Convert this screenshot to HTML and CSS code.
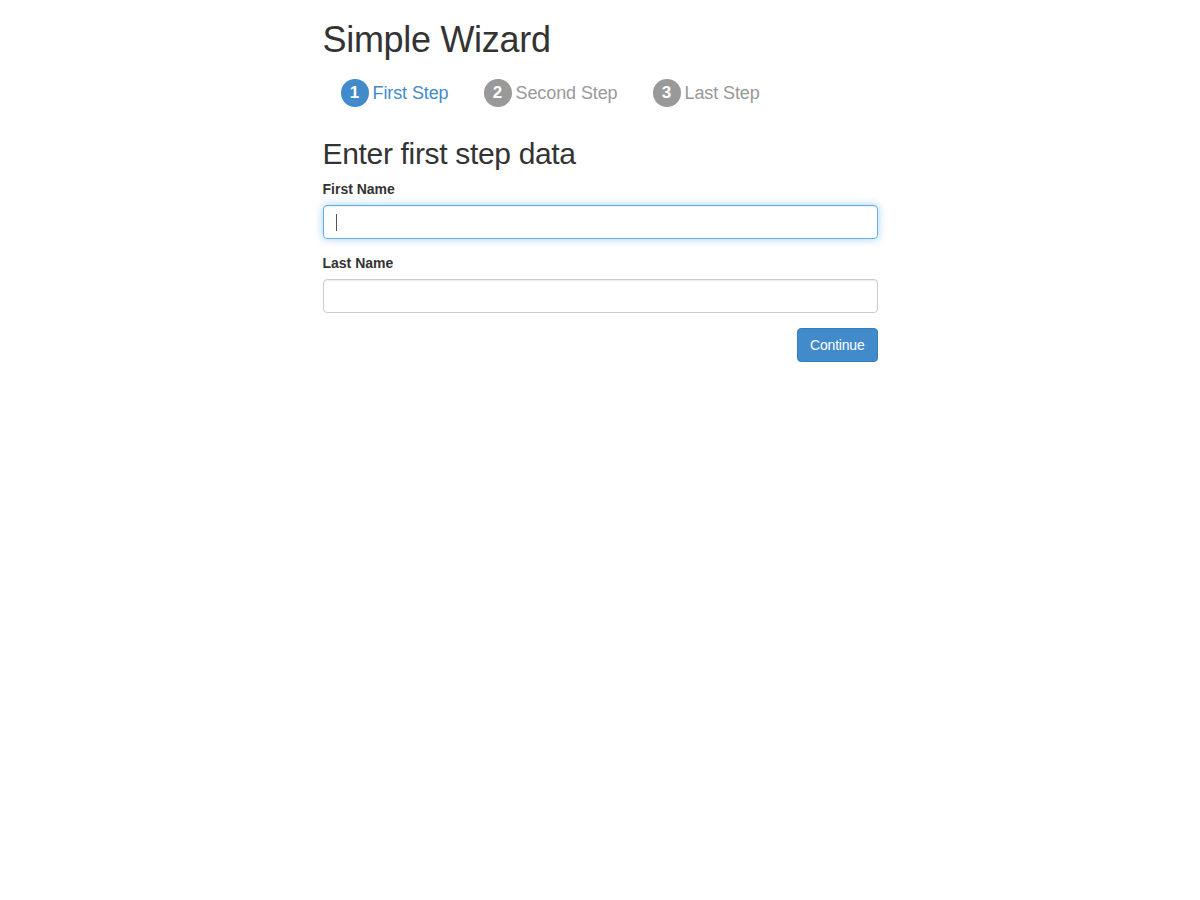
FILE: index.html
```html
<!DOCTYPE html>
<html>
<head>
    <title>Simple Wizard</title>
    <link rel="stylesheet" href="styles.css">
</head>
<body>

<div class="container">
    <h1>Simple Wizard</h1>

    <ul class="steps">
        <li class="step active"><a href="#"><span class="step-num">1</span>First Step</a></li>
        <li class="step"><a href="#"><span class="step-num">2</span>Second Step</a></li>
        <li class="step"><a href="#"><span class="step-num">3</span>Last Step</a></li>
    </ul>

    <form class="wizard-form" onsubmit="return false">
        <h2>Enter first step data</h2>
        <div class="form-group">
            <label for="firstName">First Name</label>
            <div class="input-wrap">
                <input type="text" id="firstName" class="form-control is-focus">
                <span class="caret"></span>
            </div>
        </div>
        <div class="form-group">
            <label for="lastName">Last Name</label>
            <input type="text" id="lastName" class="form-control">
        </div>
        <div class="form-actions">
            <button type="submit" class="btn-primary">Continue</button>
        </div>
    </form>
</div>

</body>
</html>
```

FILE: styles.css
```css
:root {
    --primary-color: #428bca;
    --primary-border: #357ebd;
    --muted-color: #999;
    --text-color: #333;
}

* {
    box-sizing: border-box;
}

body {
    margin: 0;
    background: #fff;
    color: var(--text-color);
    font-family: "Liberation Sans", Arial, sans-serif;
    font-size: 14px;
    line-height: 1.42857;
}

.container {
    width: 555px;
    margin: 0 auto;
}

h1 {
    font-size: 36px;
    font-weight: 500;
    line-height: 39px;
    letter-spacing: -0.3px;
    margin: 20px 0 10px;
}

h2 {
    font-size: 30px;
    font-weight: 500;
    line-height: 33px;
    letter-spacing: -0.33px;
    margin: 20px 0 10px;
}

.steps {
    list-style: none;
    margin: 0;
    padding: 0 0 0 0.5px;
    display: flex;
}

.step a {
    display: flex;
    align-items: center;
    padding: 10px 17.5px;
    font-size: 18px;
    line-height: 28px;
    letter-spacing: -0.1px;
    color: var(--muted-color);
    text-decoration: none;
}

.step-num {
    width: 28px;
    height: 28px;
    border-radius: 50%;
    background: var(--muted-color);
    color: #fff;
    font-weight: bold;
    font-size: 17px;
    text-align: center;
    line-height: 28px;
    margin-right: 4px;
}

.step.active a {
    color: var(--primary-color);
}

.step.active .step-num {
    background: var(--primary-color);
}

.form-group {
    margin-bottom: 15px;
}

label {
    display: block;
    font-weight: bold;
    margin-bottom: 5px;
}

.input-wrap {
    position: relative;
}

.caret {
    position: absolute;
    left: 13px;
    top: 9px;
    width: 1px;
    height: 17px;
    background: #555;
}

.form-control {
    display: block;
    width: 100%;
    height: 34px;
    padding: 6px 12px;
    font-family: inherit;
    font-size: 14px;
    color: #555;
    background: #fff;
    border: 1px solid #ccc;
    border-radius: 4px;
    box-shadow: inset 0 1px 1px rgba(0,0,0,0.075);
}

.form-control:focus,
.form-control.is-focus {
    outline: 0;
    border-color: #66afe9;
    box-shadow: inset 0 1px 1px rgba(0,0,0,0.075), 0 0 8px rgba(102,175,233,0.6);
}

.form-actions {
    display: flex;
    justify-content: flex-end;
}

.btn-primary {
    height: 34px;
    padding: 6px 12px;
    font-family: inherit;
    font-size: 14px;
    letter-spacing: -0.2px;
    color: #fff;
    background: var(--primary-color);
    border: 1px solid var(--primary-border);
    border-radius: 4px;
    cursor: pointer;
}
```
